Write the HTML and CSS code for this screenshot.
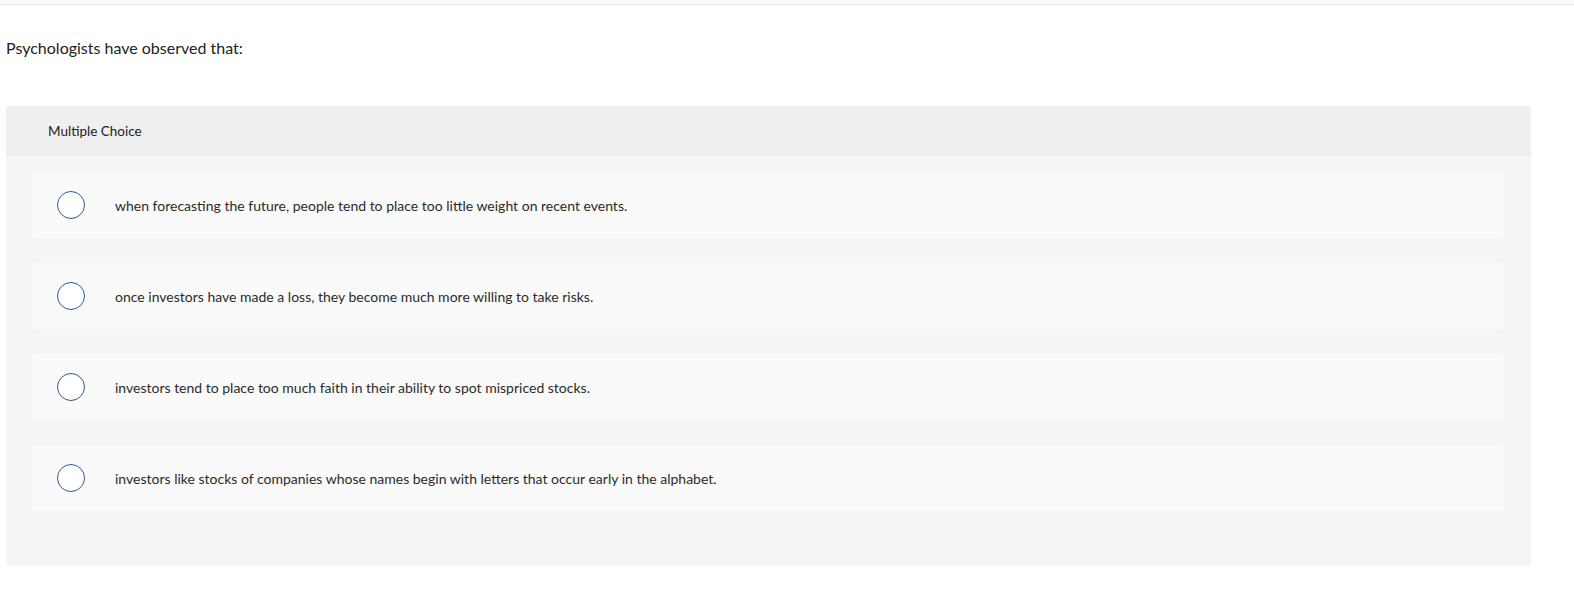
FILE: index.html
```html
<!DOCTYPE html>
<html>
<head>
<meta charset="utf-8">
<link rel="stylesheet" href="styles.css">
</head>
<body>
<div class="topbar"></div>
<div class="content">
  <p class="prompt">Psychologists have observed that:</p>
  <section class="panel">
    <header class="panel-head">Multiple Choice</header>
    <div class="panel-body">
      <label class="option"><span class="radio"></span><span class="opt-text">when forecasting the future, people tend to place too little weight on recent events.</span></label>
      <label class="option"><span class="radio"></span><span class="opt-text">once investors have made a loss, they become much more willing to take risks.</span></label>
      <label class="option"><span class="radio"></span><span class="opt-text">investors tend to place too much faith in their ability to spot mispriced stocks.</span></label>
      <label class="option"><span class="radio"></span><span class="opt-text">investors like stocks of companies whose names begin with letters that occur early in the alphabet.</span></label>
    </div>
  </section>
</div>
</body>
</html>
```
FILE: styles.css
```css
html, body {
  margin: 0;
  padding: 0;
  background: #ffffff;
  font-family: "Lato", "Open Sans", sans-serif;
  color: #333333;
}
.topbar {
  height: 4px;
  background: #fafafa;
  border-bottom: 1px solid #e9e9e9;
}
.content {
  padding: 0 43px 0 6px;
}
.prompt {
  margin: 0;
  padding-top: 33px;
  font-size: 16px;
  line-height: 20px;
  height: 68px;
  color: #222;
}
.panel {
  width: 1525px;
  background: #f5f5f5;
  border-radius: 3px;
  overflow: hidden;
  padding-bottom: 55px;
}
.panel-head {
  height: 50px;
  background: #efefef;
  padding-left: 42px;
  display: flex;
  align-items: center;
  font-size: 13.5px;
  color: #222;
}
.panel-body {
  padding: 16px 28px 0 26px;
  display: flex;
  flex-direction: column;
  gap: 25px;
}
.option {
  height: 66px;
  background: #fafafa;
  border-radius: 3px;
  display: flex;
  align-items: center;
  padding-left: 25px;
}
.radio {
  width: 26px;
  height: 26px;
  border: 1.5px solid #2c5d91;
  border-radius: 50%;
  background: #fff;
  flex: none;
}
.opt-text {
  margin-left: 30px;
  font-size: 14px;
  color: #2b2b2b;
}
```
